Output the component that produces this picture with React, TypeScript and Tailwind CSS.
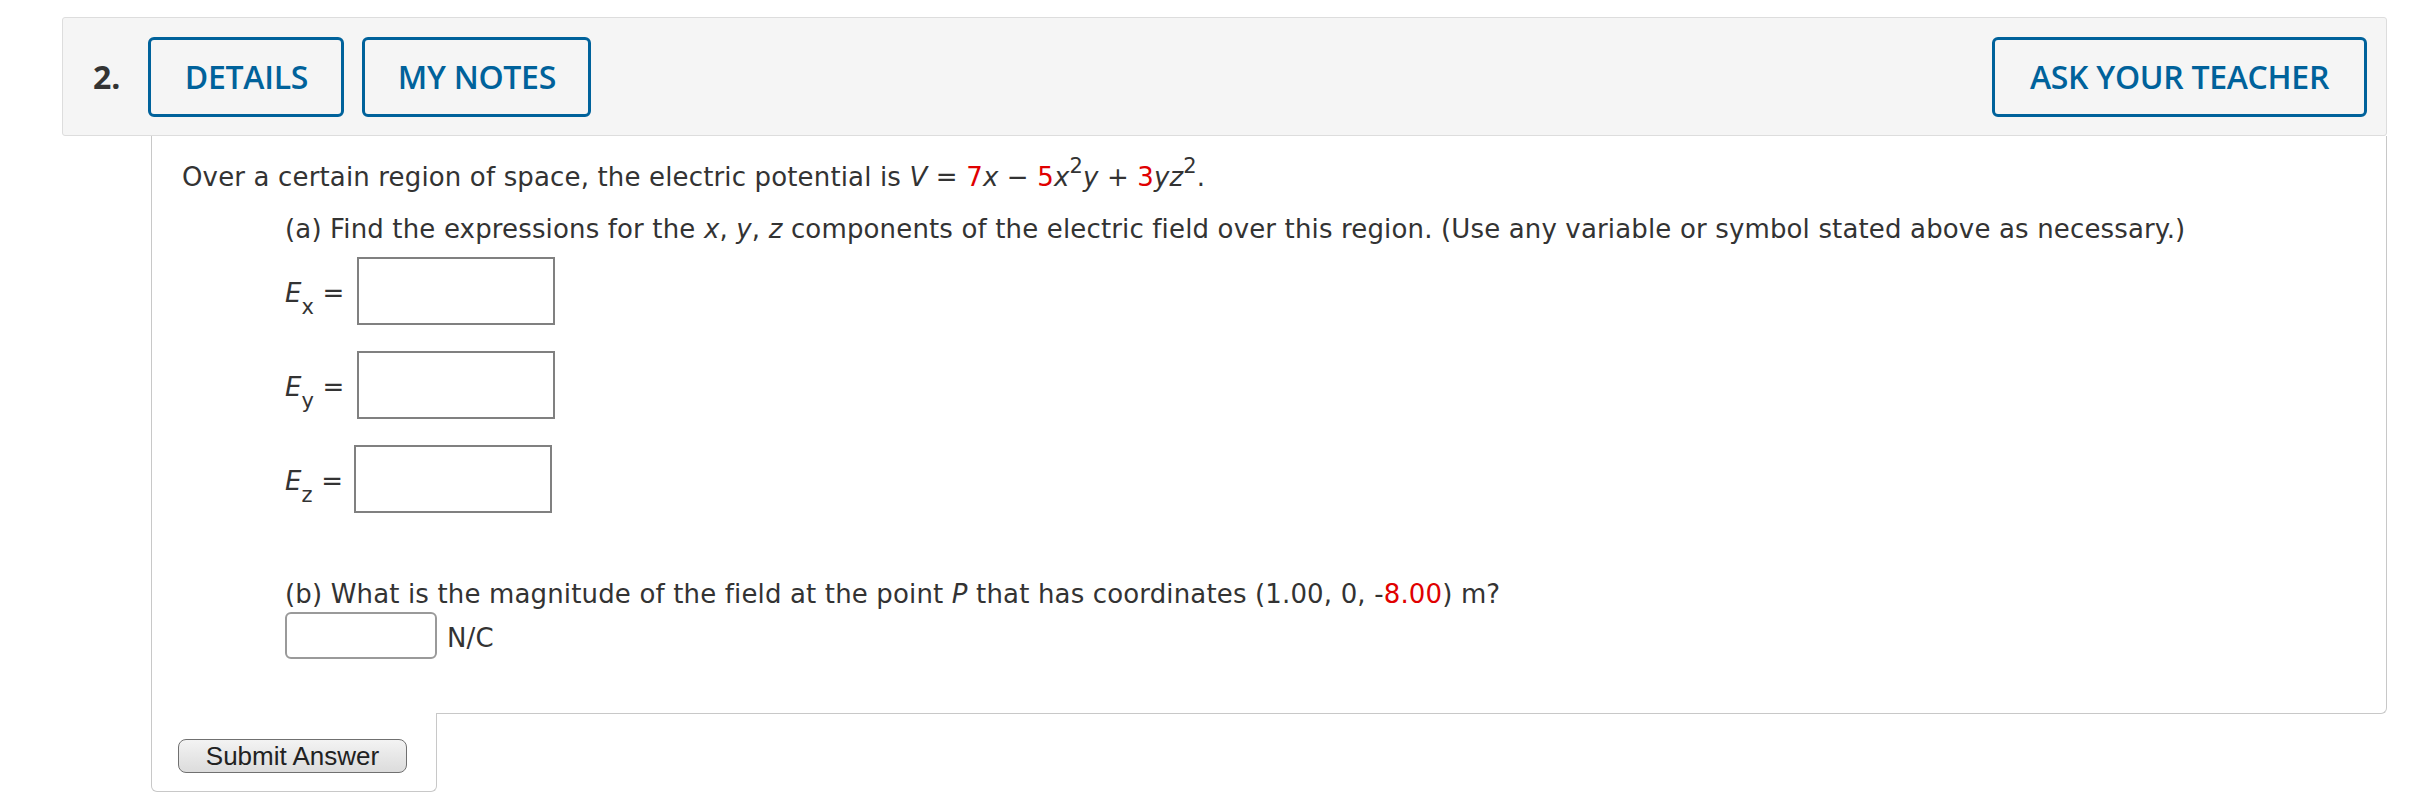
import React from "react";

const Red = ({ children }: { children: React.ReactNode }) => (
  <span className="text-[#e00000]">{children}</span>
);

const Sup = ({ children }: { children: React.ReactNode }) => (
  <sup className="text-[21px] -top-[13px]">{children}</sup>
);

function HeaderButton({ label, w }: { label: string; w: string }) {
  return (
    <div
      className={`${w} h-[80px] flex items-center justify-center border-[3px] border-[#00629b] rounded-[6px] text-[#00629b] text-[32px] font-semibold tracking-[-0.3px]`}
    >
      {label}
    </div>
  );
}

function FieldRow({ sub, shift }: { sub: string; shift?: boolean }) {
  return (
    <div className="flex items-center h-[68px]">
      <div className="leading-[36px] mt-[6px] whitespace-pre">
        <span className="italic">E</span>
        <span className="relative top-[12px] text-[21px]">{sub}</span>
        <span> = </span>
      </div>
      <div
        className={`w-[198px] h-[68px] border-2 border-[#808080] bg-white ${
          shift ? "ml-[2px]" : "ml-[4px]"
        }`}
      />
    </div>
  );
}

export default function App() {
  return (
    <div className="w-[2420px] h-[793px] bg-white overflow-hidden">
      <div
        className="ml-[62px] mt-[17px] w-[2325px] h-[119px] bg-[#f5f5f5] border border-[#dddddd] rounded-[3px] flex items-center pl-[30px] pr-[19px]"
        style={{ fontFamily: '"Open Sans", sans-serif' }}
      >
        <div className="text-[32px] font-bold text-[#333] mr-[28px]">2.</div>
        <HeaderButton label="DETAILS" w="w-[196px]" />
        <div className="w-[18px]" />
        <HeaderButton label="MY NOTES" w="w-[229px]" />
        <div className="flex-1" />
        <HeaderButton label="ASK YOUR TEACHER" w="w-[375px]" />
      </div>

      <div
        className="ml-[151px] w-[2236px] text-[#333] text-[26px] tracking-[0.15px]"
        style={{ fontFamily: '"DejaVu Sans", Verdana, sans-serif' }}
      >
        <div className="h-[578px] border-x border-b border-[#c8c8c8] rounded-br-[6px] pl-[30px] pt-[23px]">
          <div className="leading-[36px] whitespace-nowrap">
            Over a certain region of space, the electric potential is{" "}
            <span className="italic">V</span> = <Red>7</Red>
            <span className="italic">x</span> − <Red>5</Red>
            <span className="italic">x</span>
            <Sup>2</Sup>
            <span className="italic">y</span> + <Red>3</Red>
            <span className="italic">yz</span>
            <Sup>2</Sup>.
          </div>

          <div className="pl-[103px]">
            <div className="mt-[16px] leading-[36px] whitespace-nowrap">
              (a) Find the expressions for the <span className="italic">x</span>,{" "}
              <span className="italic">y</span>, <span className="italic">z</span>{" "}
              components of the electric field over this region. (Use any
              variable or symbol stated above as necessary.)
            </div>

            <div className="mt-[10px]">
              <FieldRow sub="x" />
            </div>
            <div className="mt-[26px]">
              <FieldRow sub="y" />
            </div>
            <div className="mt-[26px]">
              <FieldRow sub="z" shift />
            </div>

            <div className="mt-[63px] leading-[36px] whitespace-nowrap">
              (b) What is the magnitude of the field at the point{" "}
              <span className="italic">P</span> that has coordinates (1.00, 0, -
              <Red>8.00</Red>) m?
            </div>
            <div className="flex items-center">
              <div className="w-[152px] h-[47px] border-2 border-[#9a9a9a] rounded-[6px] bg-white" />
              <div className="ml-[10px] leading-[36px] mt-[4px]">N/C</div>
            </div>
          </div>
        </div>

        <div className="-mt-px relative w-[286px] h-[79px] bg-white border-x border-b border-[#c8c8c8] rounded-b-[6px] pl-[26px] pt-[26px]">
          <div
            className="w-[229px] h-[34px] rounded-[8px] border border-[#707070] bg-gradient-to-b from-[#f3f3f3] to-[#dcdcdc] flex items-center justify-center text-[26px] text-[#222] tracking-normal"
            style={{ fontFamily: '"Liberation Sans", Arial, sans-serif' }}
          >
            Submit Answer
          </div>
        </div>
      </div>
    </div>
  );
}
